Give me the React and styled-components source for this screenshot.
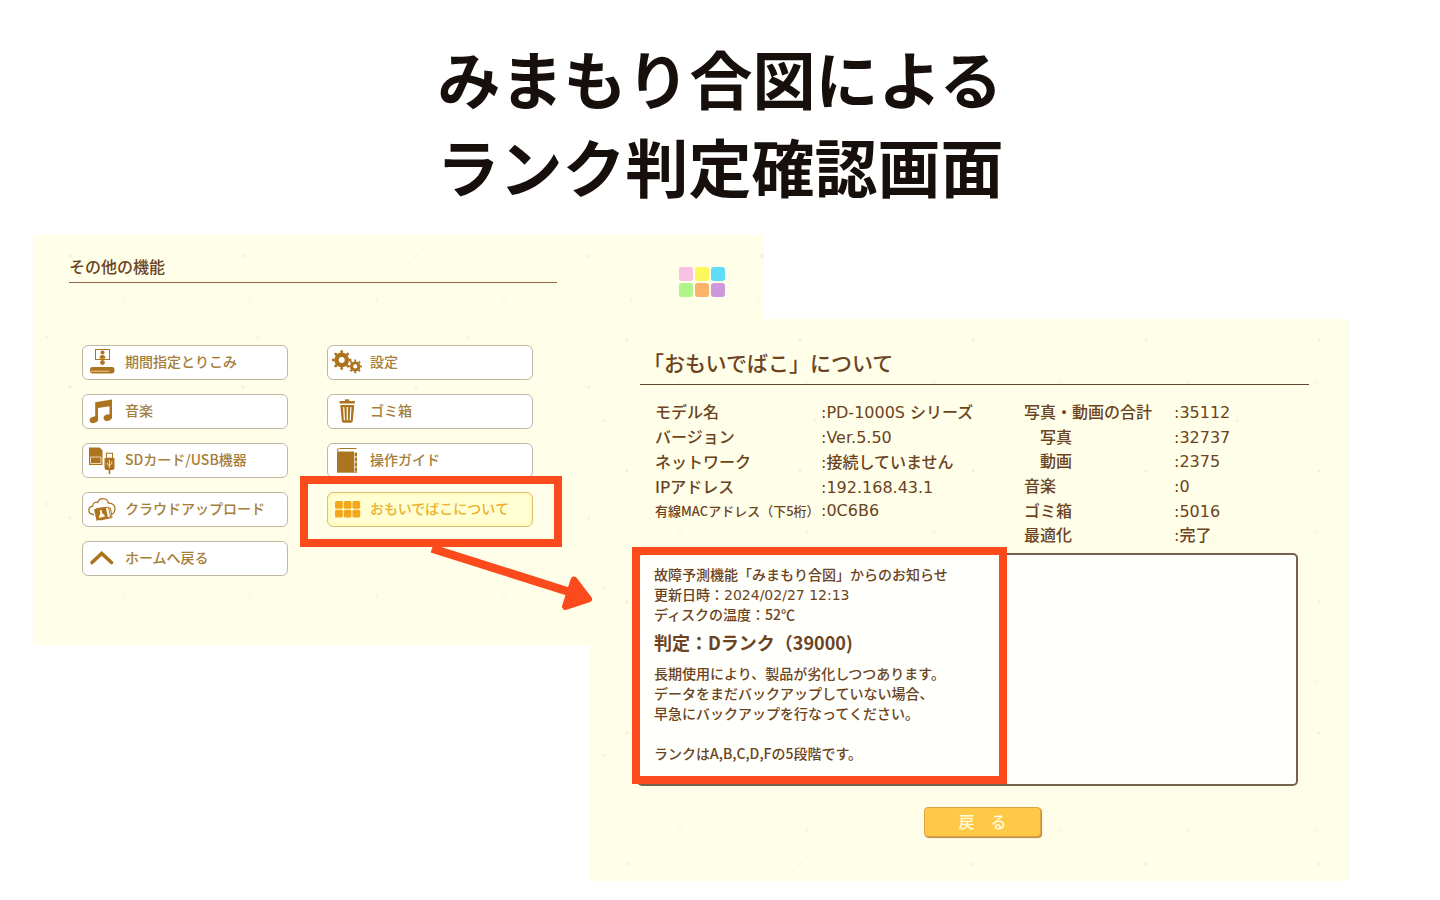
import React from "react";
import styled, { createGlobalStyle, css } from "styled-components";

const cjk = `"Noto Sans CJK JP", sans-serif`;
const red = "#fb4a1c";
const brown = "#6b4321";
const ochre = "#ad7420";

const GlobalStyle = createGlobalStyle`
  * { box-sizing: border-box; }
  body { margin: 0; background: #fff; font-family: ${cjk}; }
  h1, h2, p { margin: 0; font-weight: inherit; }
`;

const Page = styled.main`
  min-height: 100vh;
  padding: 33px 0 18px;
`;

const Title = styled.h1`
  margin: 0 0 26px;
  text-align: center;
  font-size: 63px;
  line-height: 88px;
  font-weight: 700;
  color: #170f0c;
`;

const Stage = styled.div`
  display: grid;
  grid-template-columns: 33fr 557fr 174fr 586fr 90fr;
  align-items: start;
`;

const paper = css`
  background-color: #fffee9;
  background-image:
    radial-gradient(circle at 37px 21px, #f5f0da 1px, transparent 2px),
    radial-gradient(circle at 90px 64px, #f9f6e0 1px, transparent 2px),
    radial-gradient(circle at 14px 102px, #f7f3dc 1px, transparent 2px);
  background-size: 173px 131px, 127px 149px, 211px 167px;
`;

const MenuPanel = styled.section`
  ${paper}
  grid-column: 2 / 4;
  grid-row: 1;
  padding-bottom: 69px;
`;

const MenuHeader = styled.header`
  display: flex;
  justify-content: space-between;
  align-items: flex-start;
  padding: 0 39px 0 36px;
`;

const MenuHeading = styled.h2`
  width: 488px;
  height: 48px;
  padding-top: 19px;
  border-bottom: 1px solid #93694a;
  font-size: 16px;
  line-height: 24px;
  font-weight: 500;
  color: ${brown};
`;

const Logo = styled.svg`
  width: 46px;
  height: 31px;
  margin-top: 32px;
`;

const MenuColumns = styled.nav`
  display: flex;
  gap: 39px;
  margin-top: 47px;
  padding-left: 49px;
`;

const MenuColumn = styled.div`
  display: flex;
  flex-direction: column;
  gap: 14px;
  width: 206px;
`;

const MenuSlot = styled.div`
  position: relative;
`;

const MenuButton = styled.button`
  display: flex;
  align-items: center;
  gap: 4px;
  width: 100%;
  height: 35px;
  padding: 0;
  border: 1px solid ${(p) => (p.$active ? "#dcc078" : "#bfb7a2")};
  border-radius: 6px;
  background: ${(p) => (p.$active ? "#ffffd2" : "#fff")};
  box-shadow: ${(p) => (p.$active ? "inset 0 0 5px #fff0a0" : "none")};
  font-family: ${cjk};
  font-size: 14px;
  line-height: 20px;
  font-weight: 500;
  color: ${(p) => (p.$active ? "#ecb02e" : "#a67e38")};
`;

const MenuIcon = styled.svg`
  flex: none;
  width: 38px;
  height: 33px;
`;

const MenuLabel = styled.span`
  padding-bottom: 3px;
`;

const Frame = styled.div`
  position: absolute;
  z-index: 2;
  border: 8px solid ${red};
  pointer-events: none;
`;

const ItemFrame = styled(Frame)`
  inset: -16px -29px -20px -27px;
`;

const NoticeFrame = styled(Frame)`
  top: -8px;
  bottom: 0;
  left: -7px;
  width: 375px;
`;

const Arrow = styled.svg`
  position: absolute;
  z-index: 2;
  left: 100px;
  top: 50px;
  width: 170px;
  height: 72px;
  pointer-events: none;
`;

const AboutPanel = styled.section`
  ${paper}
  grid-column: 3 / 5;
  grid-row: 1;
  margin-top: 84px;
  padding: 25px 41px 44px 50px;
`;

const AboutHeading = styled.h2`
  height: 41px;
  padding-left: 3px;
  border-bottom: 1px solid #5f4a30;
  font-size: 21px;
  line-height: 36px;
  font-weight: 500;
  color: ${brown};
`;

const Facts = styled.div`
  display: flex;
  align-items: flex-start;
  margin: 16px 0 4px;
  padding-left: 15px;
`;

const FactTable = styled.table`
  width: ${(p) => p.$width};
  height: ${(p) => p.$height};
  border-collapse: collapse;
  font-size: 16px;
  line-height: 20px;
  font-weight: 500;
  color: ${brown};
`;

const FactLabel = styled.th`
  width: ${(p) => p.$width};
  padding: 0 0 0 ${(p) => (p.$indent ? "16px" : "0")};
  text-align: left;
  vertical-align: baseline;
  font-weight: 500;
  font-size: ${(p) => (p.$small ? "13px" : "16px")};
  white-space: nowrap;
`;

const FactValue = styled.td`
  padding: 0;
  vertical-align: baseline;
  font-family: "DejaVu Sans", ${cjk};
  white-space: nowrap;
`;

const Notice = styled.section`
  position: relative;
  min-height: 233px;
  margin: 0 11px 0 -3px;
  padding: 9px 16px 11px 15px;
  border: 2px solid #75624a;
  border-radius: 5px;
  background: #fffffb;
  font-size: 14px;
  line-height: 20px;
  font-weight: 500;
  color: ${brown};
`;

const NoticeBlock = styled.p`
  white-space: pre-line;
`;

const Stamp = styled.time`
  font-family: "DejaVu Sans", ${cjk};
  line-height: 1;
`;

const Verdict = styled.p`
  padding: 4px 0 6px;
  font-size: 18px;
  line-height: 29px;
  font-weight: 700;
`;

const Actions = styled.div`
  display: flex;
  justify-content: center;
  margin-top: 21px;
  padding-left: 16px;
`;

const BackButton = styled.button`
  width: 117px;
  height: 30px;
  padding: 0 0 3px;
  border: 1px solid #dfa040;
  border-radius: 4px;
  background: #ffc847;
  box-shadow: 1px 1px 1px #b98a48;
  font-family: ${cjk};
  font-size: 16px;
  line-height: 24px;
  font-weight: 500;
  color: #fffbdc;
`;

function Gear({ cx, cy, r }) {
  return (
    <g fill="none" stroke={ochre}>
      <circle cx={cx} cy={cy} r={r * 0.54} strokeWidth={r * 0.46} />
      <circle
        cx={cx}
        cy={cy}
        r={r * 0.86}
        strokeWidth={r * 0.3}
        pathLength="16"
        strokeDasharray="0.8 1.2"
        strokeDashoffset="0.4"
      />
    </g>
  );
}

const icons = {
  capture: (
    <>
      <rect x="12.5" y="3.5" width="14" height="10" fill="#fff" stroke={ochre} strokeWidth="1" />
      <circle cx="19.5" cy="6.4" r="2" fill={ochre} />
      <path d="M16.5 12.5q0-3.5 3-3.5t3 3.5z" fill={ochre} />
      <path d="M19.5 11v4" stroke={ochre} strokeWidth="1.4" />
      <circle cx="19.5" cy="16.6" r="2.4" fill={ochre} />
      <rect x="7" y="21" width="24.5" height="6.5" rx="2.4" fill={ochre} />
      <path d="M8 25.200h18" stroke="#f3d9a6" strokeWidth="0.9" />
    </>
  ),
  music: (
    <g fill={ochre}>
      <path d="M12.2 7.2 29 4.600v18h-2.500V11.200l-11.500 1.900v12.100h-2.800z" />
      <ellipse cx="10.9" cy="24.8" rx="4.4" ry="3.2" transform="rotate(-18 10.9 24.8)" />
      <ellipse cx="24.8" cy="22.6" rx="4.3" ry="3.2" transform="rotate(-18 24.8 22.6)" />
    </g>
  ),
  media: (
    <>
      <path d="M6 3.500h10.500l3 2.800V21H6z" fill={ochre} />
      <path d="M7.500 13h10.500v6.500H7.500z" fill="none" stroke="#f6e3bd" strokeWidth="0.9" />
      <rect x="23.5" y="9.2" width="6" height="5" fill="#fff" stroke={ochre} strokeWidth="1" />
      <path d="M21.5 14h10v9.5q0 2.5-2.5 2.5h-5q-2.5 0-2.5-2.5z" fill={ochre} />
      <path d="M26.5 26v4" stroke={ochre} strokeWidth="1.6" />
      <path d="M26.5 16v8M24.3 18.5v2l2.2 1.6M28.7 17.6v2l-2.2 1.6" fill="none" stroke="#f6e3bd" strokeWidth="0.9" />
    </>
  ),
  cloud: (
    <>
      <path
        d="M11 21.5H9.8C4.500 20.500 4.600 14 9.600 13.200 9.800 9.200 13.300 8.600 14.600 9.500 16.500 4 24.500 4.300 25.300 10.200 29.800 9.800 32.500 13 31.900 16.500 31.500 19.800 29.500 21.300 27.500 21.500"
        fill="#fff"
        stroke={ochre}
        strokeWidth="1.3"
      />
      <path d="M15 16.500 27.500 15 29 24.500 17 27z" fill="#fff" stroke={ochre} strokeWidth="1" />
      <path d="M13.500 15.500 25.500 14 27.500 24 15.500 26.500z" fill="#fff" stroke={ochre} strokeWidth="1" />
      <path d="M11 16.200 22.800 14 25 25 13.500 27.800z" fill={ochre} />
      <path d="M16.800 17.400l1.800-.4.600 3 1.800 1.600 1.200 2-6.200 1.300.300-2.300.900-1.600z" fill="#fff6df" />
    </>
  ),
  home: (
    <path d="M9 20.500 18.700 11.500 28.500 20.500" fill="none" stroke={ochre} strokeWidth="3.600" strokeLinecap="round" />
  ),
  settings: (
    <>
      <Gear cx={13.7} cy={14} r={9.600} />
      <Gear cx={27.2} cy={20.400} r={6.800} />
    </>
  ),
  trash: (
    <>
      <path d="M17 6.300V4.300h4.200v2" fill={ochre} />
      <rect x="11.500" y="6" width="15.500" height="2.600" rx="1" fill={ochre} />
      <path d="M12.300 10h14l-1.500 16q-.2 1.800-2 1.800h-7q-1.800 0-2-1.800z" fill={ochre} />
      <path d="M15.700 12l.7 13.200M19.300 12v13.200M22.900 12l-.7 13.200" stroke="#fff" strokeWidth="1.200" />
    </>
  ),
  guide: (
    <>
      <path d="M9 7.500h17V28.700H9z" fill={ochre} />
      <path d="M9.500 7.500q-.5-3 2-3H28.500" fill="none" stroke={ochre} strokeWidth="1" />
      <path d="M27.800 8.500v19.800" stroke={ochre} strokeWidth="2.400" strokeDasharray="4 1" />
      <path d="M26 28.200h3" stroke={ochre} strokeWidth="1" />
    </>
  ),
  tiles: (
    <g fill="#f3a81c">
      {[7, 15.7, 24.4].map((x) =>
        [8, 16.7].map((y) => <rect key={`${x}-${y}`} x={x} y={y} width="7.800" height="7.800" rx="1.600" />)
      )}
    </g>
  ),
};

function MenuItem({ icon, label, active, children }) {
  return (
    <MenuSlot>
      <MenuButton type="button" $active={active}>
        <MenuIcon viewBox="0 0 38 33" aria-hidden="true">
          {icons[icon]}
        </MenuIcon>
        <MenuLabel>{label}</MenuLabel>
      </MenuButton>
      {children}
    </MenuSlot>
  );
}

const leftItems = [
  ["capture", "期間指定とりこみ"],
  ["music", "音楽"],
  ["media", "SDカード/USB機器"],
  ["cloud", "クラウドアップロード"],
  ["home", "ホームへ戻る"],
];
const rightItems = [
  ["settings", "設定"],
  ["trash", "ゴミ箱"],
  ["guide", "操作ガイド"],
];

const logoTiles = ["#f8c0e2", "#fdf75c", "#5fdcf7", "#b0f58a", "#fbb36c", "#cd98dc"];

const deviceFacts = [
  { label: "モデル名", value: "PD-1000S シリーズ" },
  { label: "バージョン", value: "Ver.5.50" },
  { label: "ネットワーク", value: "接続していません" },
  { label: "IPアドレス", value: "192.168.43.1" },
  { label: "有線MACアドレス（下5桁）", value: "0C6B6", small: true },
];
const contentFacts = [
  { label: "写真・動画の合計", value: "35112" },
  { label: "写真", value: "32737", indent: true },
  { label: "動画", value: "2375", indent: true },
  { label: "音楽", value: "0" },
  { label: "ゴミ箱", value: "5016" },
  { label: "最適化", value: "完了" },
];

function FactList({ facts, width, labelWidth, height }) {
  return (
    <FactTable $width={width} $height={height}>
      <tbody>
        {facts.map((f) => (
          <tr key={f.label}>
            <FactLabel scope="row" $width={labelWidth} $indent={f.indent} $small={f.small}>
              {f.label}
            </FactLabel>
            <FactValue>:{f.value}</FactValue>
          </tr>
        ))}
      </tbody>
    </FactTable>
  );
}

export default function App() {
  return (
    <>
      <GlobalStyle />
      <Page>
        <Title>
          みまもり合図による
          <br />
          ランク判定確認画面
        </Title>
        <Stage>
          <MenuPanel>
            <MenuHeader>
              <MenuHeading>その他の機能</MenuHeading>
              <Logo viewBox="0 0 46 31" aria-hidden="true">
                {logoTiles.map((fill, i) => (
                  <rect key={fill} x={(i % 3) * 16} y={i < 3 ? 0 : 16} width="14" height="14" rx="3" fill={fill} />
                ))}
              </Logo>
            </MenuHeader>
            <MenuColumns>
              <MenuColumn>
                {leftItems.map(([icon, label]) => (
                  <MenuItem key={icon} icon={icon} label={label} />
                ))}
              </MenuColumn>
              <MenuColumn>
                {rightItems.map(([icon, label]) => (
                  <MenuItem key={icon} icon={icon} label={label} />
                ))}
                <MenuItem icon="tiles" label="おもいでばこについて" active>
                  <ItemFrame />
                  <Arrow viewBox="0 0 170 72" aria-hidden="true">
                    <path d="M5 6.500 141 49.500" stroke={red} strokeWidth="8.500" />
                    <path
                      d="M147 38 161.500 57 138.500 64.500z"
                      fill={red}
                      stroke={red}
                      strokeWidth="7"
                      strokeLinejoin="round"
                    />
                  </Arrow>
                </MenuItem>
              </MenuColumn>
            </MenuColumns>
          </MenuPanel>

          <AboutPanel>
            <AboutHeading>「おもいでばこ」について</AboutHeading>
            <Facts>
              <FactList facts={deviceFacts} width="369px" labelWidth="166px" height="123px" />
              <FactList facts={contentFacts} width="240px" labelWidth="150px" height="148px" />
            </Facts>
            <Notice>
              <NoticeBlock>
                故障予測機能「みまもり合図」からのお知らせ
                <br />
                更新日時：<Stamp dateTime="2024-02-27T12:13">2024/02/27 12:13</Stamp>
                <br />
                ディスクの温度：52℃
              </NoticeBlock>
              <Verdict>判定：Dランク（39000)</Verdict>
              <NoticeBlock>
                長期使用により、製品が劣化しつつあります。
                <br />
                データをまだバックアップしていない場合、
                <br />
                早急にバックアップを行なってください。
                <br />
                <br />
                ランクはA,B,C,D,Fの5段階です。
              </NoticeBlock>
              <NoticeFrame />
            </Notice>
            <Actions>
              <BackButton type="button">戻　る</BackButton>
            </Actions>
          </AboutPanel>
        </Stage>
      </Page>
    </>
  );
}
